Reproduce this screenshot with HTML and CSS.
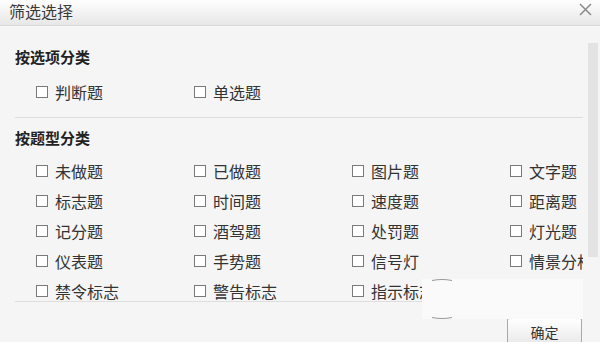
FILE: index.html
```html
<!DOCTYPE html>
<html lang="zh-CN">
<head>
<meta charset="utf-8">
<title>筛选选择</title>
<link rel="stylesheet" href="styles.css">
</head>
<body>
<div class="dialog">
  <div class="titlebar">
    <span class="title">筛选选择</span>
    <svg class="close" width="13" height="13" viewBox="0 0 13 13"><path d="M1 1 L12 12 M12 1 L1 12" stroke="#8a8a8a" stroke-width="1.5" fill="none"/></svg>
  </div>
  <div class="main">
    <div class="content">
      <div class="heading">按选项分类</div>
      <div class="grid">
        <label class="item"><span class="box"></span><span class="txt">判断题</span></label>
        <label class="item"><span class="box"></span><span class="txt">单选题</span></label>
      </div>
      <div class="divider"></div>
      <div class="heading h2">按题型分类</div>
      <div class="grid">
        <label class="item"><span class="box"></span><span class="txt">未做题</span></label>
        <label class="item"><span class="box"></span><span class="txt">已做题</span></label>
        <label class="item"><span class="box"></span><span class="txt">图片题</span></label>
        <label class="item"><span class="box"></span><span class="txt">文字题</span></label>
        <label class="item"><span class="box"></span><span class="txt">标志题</span></label>
        <label class="item"><span class="box"></span><span class="txt">时间题</span></label>
        <label class="item"><span class="box"></span><span class="txt">速度题</span></label>
        <label class="item"><span class="box"></span><span class="txt">距离题</span></label>
        <label class="item"><span class="box"></span><span class="txt">记分题</span></label>
        <label class="item"><span class="box"></span><span class="txt">酒驾题</span></label>
        <label class="item"><span class="box"></span><span class="txt">处罚题</span></label>
        <label class="item"><span class="box"></span><span class="txt">灯光题</span></label>
        <label class="item"><span class="box"></span><span class="txt">仪表题</span></label>
        <label class="item"><span class="box"></span><span class="txt">手势题</span></label>
        <label class="item"><span class="box"></span><span class="txt">信号灯</span></label>
        <label class="item"><span class="box"></span><span class="txt">情景分析</span></label>
        <label class="item"><span class="box"></span><span class="txt">禁令标志</span></label>
        <label class="item"><span class="box"></span><span class="txt">警告标志</span></label>
        <label class="item"><span class="box"></span><span class="txt">指示标志</span></label>
        <label class="item"><span class="box"></span><span class="txt">指路标志</span></label>
      </div>
    </div>
    <div class="scrollbar"></div>
  </div>
  <div class="footer">
    <button class="btn">确定</button>
  </div>
  <div class="overlay">
    <svg width="40" height="42" viewBox="0 0 40 42"><path d="M10 2.5 Q20 0.5 30 2.5" stroke="#9a9a9a" stroke-width="1.2" fill="none"/><path d="M10 39.5 Q20 41.5 30 39.5" stroke="#9a9a9a" stroke-width="1.2" fill="none"/></svg>
  </div>
</div>
</body>
</html>
```
FILE: styles.css
```css
* { box-sizing: border-box; }
html, body { margin: 0; padding: 0; }
body {
  width: 600px;
  height: 342px;
  overflow: hidden;
  background: #f5f5f5;
  font-family: "Noto Sans CJK SC", "Noto Sans", sans-serif;
  color: #333;
}
.dialog { position: relative; width: 600px; height: 342px; }
.titlebar {
  height: 26px;
  display: flex;
  align-items: center;
  justify-content: space-between;
  padding: 0 8px 0 9px;
  background: linear-gradient(#fefefe, #e7e7e7);
  border-bottom: 1px solid #d9d9d9;
}
.title { font-size: 16px; line-height: 25px; color: #3a3a3a; margin-top: -2px; }
.close { margin-top: -6px; }
.main { display: flex; height: 276px; }
.content {
  width: 568px;
  margin-left: 15px;
  overflow: hidden;
  border-bottom: 1px solid #dedede;
  padding-top: 21px;
}
.heading { font-size: 15px; font-weight: bold; line-height: 20px; color: #222; }
.h2 { margin-top: 10px; }
.grid {
  display: grid;
  grid-template-columns: repeat(4, 158px);
  padding-left: 21px;
  margin-top: 10px;
}
.h2 + .grid { margin-top: 8px; }
.item {
  display: flex;
  align-items: center;
  height: 30px;
  font-size: 16px;
  white-space: nowrap;
  color: #333;
}
.txt { line-height: 16px; }
.box {
  width: 12px;
  height: 12px;
  border: 1px solid #7a7a7a;
  background: #fff;
  margin-right: 7px;
  flex: none;
}
.divider { height: 1px; background: #dedede; margin-top: 10px; }
.scrollbar {
  width: 10px;
  height: 214px;
  margin: 17px 0 0 5px;
  background: #e3e3e3;
}
.footer {
  display: flex;
  justify-content: flex-end;
  padding: 16px 18px 0 0;
}
.btn {
  width: 75px;
  height: 27px;
  font-family: "Noto Sans CJK SC", sans-serif;
  font-size: 14px;
  color: #333;
  background: linear-gradient(#ffffff, #e9e9e9);
  border: 1px solid #a9a9a9;
  border-radius: 2px;
  padding: 0;
  line-height: 24px;
}
.overlay {
  position: absolute;
  left: 422px;
  top: 279px;
  width: 161px;
  height: 40px;
  background: #fafafa;
}
.overlay svg { display: block; margin-top: -1px; }
```
